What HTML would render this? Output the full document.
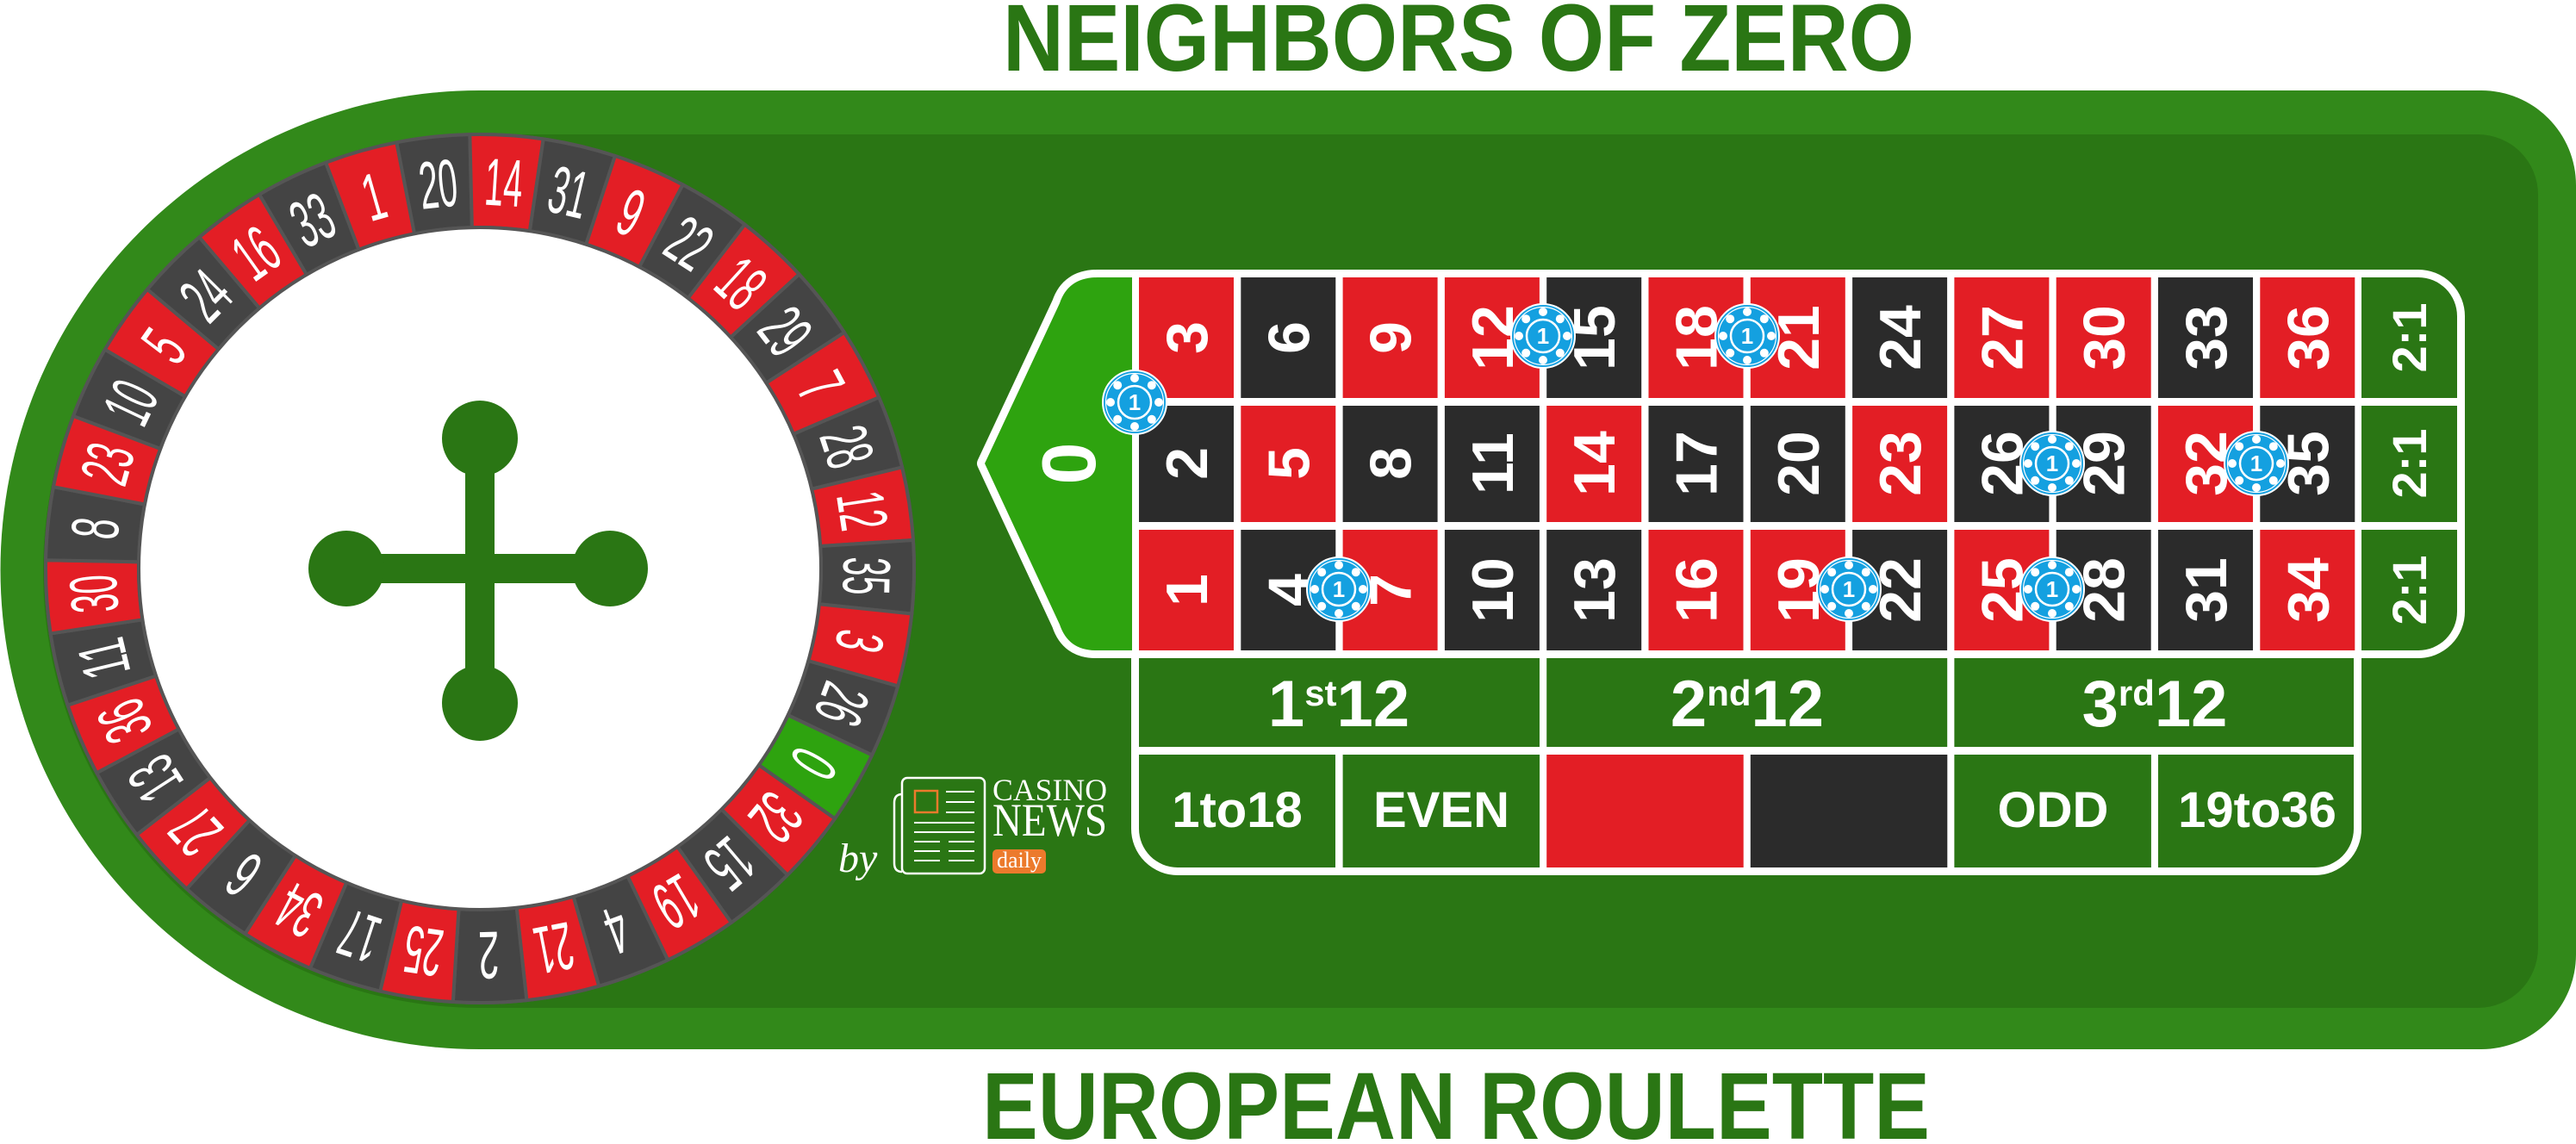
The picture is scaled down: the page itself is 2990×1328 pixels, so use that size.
<!DOCTYPE html>
<html><head><meta charset="utf-8"><style>
html,body{margin:0;padding:0;background:#fff;}
svg{display:block;}
text{font-family:"Liberation Sans",sans-serif;}
.n{font-weight:bold;font-size:68px;fill:#fff;text-anchor:middle;}
.w{font-family:"Liberation Sans Narrow","Liberation Sans",sans-serif;font-size:78px;fill:#fff;text-anchor:middle;}
.c1{font-weight:bold;font-size:26px;fill:#fff;text-anchor:middle;}
.sf{font-family:"Liberation Serif",serif;fill:#fff;}
</style></head><body>
<svg width="2990" height="1328" viewBox="0 0 2990 1328" xmlns="http://www.w3.org/2000/svg">
<defs>
<path id="wd" d="M514.26,157.8 A504,504 0 0 1 599.74,157.8 L590.58,265.4 A396,396 0 0 0 523.42,265.4 Z" stroke="#555" stroke-width="4"/>
<clipPath id="gc"><path d="M1274,322 H2807 A45,45 0 0 1 2852,367 V710 A45,45 0 0 1 2807,755 H2732 V962 A45,45 0 0 1 2687,1007 H1367 A45,45 0 0 1 1322,962 V755 H1272 Q1240,755 1230,725 L1143,538 L1230,352 Q1240,322 1274,322 Z"/></clipPath>
<g id="chip">
<circle r="37" fill="#14a0e0" stroke="#fff" stroke-width="2"/>
<circle r="33.5" fill="none" stroke="#fff" stroke-width="1.2"/>
<g fill="#fff">
<circle cx="0" cy="-28" r="5"/><circle cx="0" cy="28" r="5"/><circle cx="28" cy="0" r="5"/><circle cx="-28" cy="0" r="5"/>
<circle cx="19.8" cy="19.8" r="5"/><circle cx="-19.8" cy="19.8" r="5"/><circle cx="19.8" cy="-19.8" r="5"/><circle cx="-19.8" cy="-19.8" r="5"/>
</g>
<circle r="19" fill="#14a0e0" stroke="#fff" stroke-width="2.5"/>
</g>
</defs>

<path d="M557,105 H2880 A110,110 0 0 1 2990,215 V1108 A110,110 0 0 1 2880,1218 H557 A556.5,556.5 0 0 1 557,105 Z" fill="#32891a"/>
<path d="M557,156 H2876 A70,70 0 0 1 2946,226 V1100 A70,70 0 0 1 2876,1170 H557 A507,507 0 0 1 557,156 Z" fill="#2a7614"/>

<text x="1693" y="82" style="font-size:110px;font-weight:bold" fill="#2a7614" text-anchor="middle" textLength="1058" lengthAdjust="spacingAndGlyphs">NEIGHBORS OF ZERO</text>
<text x="1690" y="1322" style="font-size:110px;font-weight:bold" fill="#2a7614" text-anchor="middle" textLength="1100" lengthAdjust="spacingAndGlyphs">EUROPEAN ROULETTE</text>

<circle cx="557" cy="660" r="506" fill="#555"/>
<g>
<use href="#wd" fill="#2ea30f" transform="rotate(120.3 557 660)"/>
<use href="#wd" fill="#e31e25" transform="rotate(130.03 557 660)"/>
<use href="#wd" fill="#444" transform="rotate(139.76 557 660)"/>
<use href="#wd" fill="#e31e25" transform="rotate(149.49 557 660)"/>
<use href="#wd" fill="#444" transform="rotate(159.22 557 660)"/>
<use href="#wd" fill="#e31e25" transform="rotate(168.95 557 660)"/>
<use href="#wd" fill="#444" transform="rotate(178.68 557 660)"/>
<use href="#wd" fill="#e31e25" transform="rotate(188.41 557 660)"/>
<use href="#wd" fill="#444" transform="rotate(198.14 557 660)"/>
<use href="#wd" fill="#e31e25" transform="rotate(207.87 557 660)"/>
<use href="#wd" fill="#444" transform="rotate(217.6 557 660)"/>
<use href="#wd" fill="#e31e25" transform="rotate(227.33 557 660)"/>
<use href="#wd" fill="#444" transform="rotate(237.06 557 660)"/>
<use href="#wd" fill="#e31e25" transform="rotate(246.79 557 660)"/>
<use href="#wd" fill="#444" transform="rotate(256.52 557 660)"/>
<use href="#wd" fill="#e31e25" transform="rotate(266.25 557 660)"/>
<use href="#wd" fill="#444" transform="rotate(275.98 557 660)"/>
<use href="#wd" fill="#e31e25" transform="rotate(285.71 557 660)"/>
<use href="#wd" fill="#444" transform="rotate(295.43 557 660)"/>
<use href="#wd" fill="#e31e25" transform="rotate(305.16 557 660)"/>
<use href="#wd" fill="#444" transform="rotate(314.89 557 660)"/>
<use href="#wd" fill="#e31e25" transform="rotate(324.62 557 660)"/>
<use href="#wd" fill="#444" transform="rotate(334.35 557 660)"/>
<use href="#wd" fill="#e31e25" transform="rotate(344.08 557 660)"/>
<use href="#wd" fill="#444" transform="rotate(353.81 557 660)"/>
<use href="#wd" fill="#e31e25" transform="rotate(3.54 557 660)"/>
<use href="#wd" fill="#444" transform="rotate(13.27 557 660)"/>
<use href="#wd" fill="#e31e25" transform="rotate(23 557 660)"/>
<use href="#wd" fill="#444" transform="rotate(32.73 557 660)"/>
<use href="#wd" fill="#e31e25" transform="rotate(42.46 557 660)"/>
<use href="#wd" fill="#444" transform="rotate(52.19 557 660)"/>
<use href="#wd" fill="#e31e25" transform="rotate(61.92 557 660)"/>
<use href="#wd" fill="#444" transform="rotate(71.65 557 660)"/>
<use href="#wd" fill="#e31e25" transform="rotate(81.38 557 660)"/>
<use href="#wd" fill="#444" transform="rotate(91.11 557 660)"/>
<use href="#wd" fill="#e31e25" transform="rotate(100.84 557 660)"/>
<use href="#wd" fill="#444" transform="rotate(110.57 557 660)"/>
</g>
<g>
<text class="w" x="557" y="238" textLength="24" lengthAdjust="spacingAndGlyphs" transform="rotate(120.3 557 660)">0</text>
<text class="w" x="557" y="238" textLength="44" lengthAdjust="spacingAndGlyphs" transform="rotate(130.03 557 660)">32</text>
<text class="w" x="557" y="238" textLength="44" lengthAdjust="spacingAndGlyphs" transform="rotate(139.76 557 660)">15</text>
<text class="w" x="557" y="238" textLength="44" lengthAdjust="spacingAndGlyphs" transform="rotate(149.49 557 660)">19</text>
<text class="w" x="557" y="238" textLength="24" lengthAdjust="spacingAndGlyphs" transform="rotate(159.22 557 660)">4</text>
<text class="w" x="557" y="238" textLength="44" lengthAdjust="spacingAndGlyphs" transform="rotate(168.95 557 660)">21</text>
<text class="w" x="557" y="238" textLength="24" lengthAdjust="spacingAndGlyphs" transform="rotate(178.68 557 660)">2</text>
<text class="w" x="557" y="238" textLength="44" lengthAdjust="spacingAndGlyphs" transform="rotate(188.41 557 660)">25</text>
<text class="w" x="557" y="238" textLength="44" lengthAdjust="spacingAndGlyphs" transform="rotate(198.14 557 660)">17</text>
<text class="w" x="557" y="238" textLength="44" lengthAdjust="spacingAndGlyphs" transform="rotate(207.87 557 660)">34</text>
<text class="w" x="557" y="238" textLength="24" lengthAdjust="spacingAndGlyphs" transform="rotate(217.6 557 660)">6</text>
<text class="w" x="557" y="238" textLength="44" lengthAdjust="spacingAndGlyphs" transform="rotate(227.33 557 660)">27</text>
<text class="w" x="557" y="238" textLength="44" lengthAdjust="spacingAndGlyphs" transform="rotate(237.06 557 660)">13</text>
<text class="w" x="557" y="238" textLength="44" lengthAdjust="spacingAndGlyphs" transform="rotate(246.79 557 660)">36</text>
<text class="w" x="557" y="238" textLength="44" lengthAdjust="spacingAndGlyphs" transform="rotate(256.52 557 660)">11</text>
<text class="w" x="557" y="238" textLength="44" lengthAdjust="spacingAndGlyphs" transform="rotate(266.25 557 660)">30</text>
<text class="w" x="557" y="238" textLength="24" lengthAdjust="spacingAndGlyphs" transform="rotate(275.98 557 660)">8</text>
<text class="w" x="557" y="238" textLength="44" lengthAdjust="spacingAndGlyphs" transform="rotate(285.71 557 660)">23</text>
<text class="w" x="557" y="238" textLength="44" lengthAdjust="spacingAndGlyphs" transform="rotate(295.43 557 660)">10</text>
<text class="w" x="557" y="238" textLength="24" lengthAdjust="spacingAndGlyphs" transform="rotate(305.16 557 660)">5</text>
<text class="w" x="557" y="238" textLength="44" lengthAdjust="spacingAndGlyphs" transform="rotate(314.89 557 660)">24</text>
<text class="w" x="557" y="238" textLength="44" lengthAdjust="spacingAndGlyphs" transform="rotate(324.62 557 660)">16</text>
<text class="w" x="557" y="238" textLength="44" lengthAdjust="spacingAndGlyphs" transform="rotate(334.35 557 660)">33</text>
<text class="w" x="557" y="238" textLength="24" lengthAdjust="spacingAndGlyphs" transform="rotate(344.08 557 660)">1</text>
<text class="w" x="557" y="238" textLength="44" lengthAdjust="spacingAndGlyphs" transform="rotate(353.81 557 660)">20</text>
<text class="w" x="557" y="238" textLength="44" lengthAdjust="spacingAndGlyphs" transform="rotate(3.54 557 660)">14</text>
<text class="w" x="557" y="238" textLength="44" lengthAdjust="spacingAndGlyphs" transform="rotate(13.27 557 660)">31</text>
<text class="w" x="557" y="238" textLength="24" lengthAdjust="spacingAndGlyphs" transform="rotate(23 557 660)">9</text>
<text class="w" x="557" y="238" textLength="44" lengthAdjust="spacingAndGlyphs" transform="rotate(32.73 557 660)">22</text>
<text class="w" x="557" y="238" textLength="44" lengthAdjust="spacingAndGlyphs" transform="rotate(42.46 557 660)">18</text>
<text class="w" x="557" y="238" textLength="44" lengthAdjust="spacingAndGlyphs" transform="rotate(52.19 557 660)">29</text>
<text class="w" x="557" y="238" textLength="24" lengthAdjust="spacingAndGlyphs" transform="rotate(61.92 557 660)">7</text>
<text class="w" x="557" y="238" textLength="44" lengthAdjust="spacingAndGlyphs" transform="rotate(71.65 557 660)">28</text>
<text class="w" x="557" y="238" textLength="44" lengthAdjust="spacingAndGlyphs" transform="rotate(81.38 557 660)">12</text>
<text class="w" x="557" y="238" textLength="44" lengthAdjust="spacingAndGlyphs" transform="rotate(91.11 557 660)">35</text>
<text class="w" x="557" y="238" textLength="24" lengthAdjust="spacingAndGlyphs" transform="rotate(100.84 557 660)">3</text>
<text class="w" x="557" y="238" textLength="44" lengthAdjust="spacingAndGlyphs" transform="rotate(110.57 557 660)">26</text>
</g>
<circle cx="557" cy="660" r="396" fill="#fff" stroke="#555" stroke-width="4"/>
<g fill="#2a7614">
<rect x="540" y="509" width="34" height="307"/>
<rect x="402" y="643" width="306" height="34"/>
<circle cx="557" cy="509" r="44"/><circle cx="557" cy="816" r="44"/>
<circle cx="402" cy="660" r="44"/><circle cx="708" cy="660" r="44"/>
</g>

<text class="sf" x="973" y="1012" style="font-style:italic;font-size:48px">by</text>
<g fill="none" stroke="#fff" stroke-width="2.5">
<path d="M1047,922 Q1038,922 1038,932 V1002 Q1038,1012 1047,1012"/>
<rect x="1047" y="903" width="96" height="111" rx="6"/>
<path d="M1098,919H1131M1098,931H1131M1098,943H1131M1061,955H1131M1061,966H1131M1061,977H1091M1101,977H1131M1061,988H1091M1101,988H1131M1061,999H1091M1101,999H1131" stroke-width="2"/>
</g>
<rect x="1062" y="918" width="26" height="25" fill="none" stroke="#ec7a2c" stroke-width="2.5"/>
<text class="sf" x="1152" y="929" style="font-size:36px" textLength="133" lengthAdjust="spacingAndGlyphs">CASINO</text>
<text class="sf" x="1152" y="970" style="font-size:54px" textLength="133" lengthAdjust="spacingAndGlyphs">NEWS</text>
<rect x="1152" y="986" width="62" height="28" rx="5" fill="#ec7a2c"/>
<text class="sf" x="1157" y="1007" style="font-size:26px">daily</text>

<path d="M1274,322 H2807 A45,45 0 0 1 2852,367 V710 A45,45 0 0 1 2807,755 H2732 V962 A45,45 0 0 1 2687,1007 H1367 A45,45 0 0 1 1322,962 V755 H1272 Q1240,755 1230,725 L1143,538 L1230,352 Q1240,322 1274,322 Z" fill="#fff" stroke="#fff" stroke-width="18" stroke-linejoin="round"/>
<g clip-path="url(#gc)">
<rect x="1100" y="300" width="214" height="470" fill="#2ea30f"/>
<rect x="1322" y="322" width="110" height="140" fill="#e31e25"/>
<rect x="1440.3" y="322" width="110" height="140" fill="#2b2b2b"/>
<rect x="1558.6" y="322" width="110" height="140" fill="#e31e25"/>
<rect x="1676.9" y="322" width="110" height="140" fill="#e31e25"/>
<rect x="1795.2" y="322" width="110" height="140" fill="#2b2b2b"/>
<rect x="1913.5" y="322" width="110" height="140" fill="#e31e25"/>
<rect x="2031.8" y="322" width="110" height="140" fill="#e31e25"/>
<rect x="2150.1" y="322" width="110" height="140" fill="#2b2b2b"/>
<rect x="2268.4" y="322" width="110" height="140" fill="#e31e25"/>
<rect x="2386.7" y="322" width="110" height="140" fill="#e31e25"/>
<rect x="2505" y="322" width="110" height="140" fill="#2b2b2b"/>
<rect x="2623.3" y="322" width="110" height="140" fill="#e31e25"/>
<rect x="1322" y="471" width="110" height="135" fill="#2b2b2b"/>
<rect x="1440.3" y="471" width="110" height="135" fill="#e31e25"/>
<rect x="1558.6" y="471" width="110" height="135" fill="#2b2b2b"/>
<rect x="1676.9" y="471" width="110" height="135" fill="#2b2b2b"/>
<rect x="1795.2" y="471" width="110" height="135" fill="#e31e25"/>
<rect x="1913.5" y="471" width="110" height="135" fill="#2b2b2b"/>
<rect x="2031.8" y="471" width="110" height="135" fill="#2b2b2b"/>
<rect x="2150.1" y="471" width="110" height="135" fill="#e31e25"/>
<rect x="2268.4" y="471" width="110" height="135" fill="#2b2b2b"/>
<rect x="2386.7" y="471" width="110" height="135" fill="#2b2b2b"/>
<rect x="2505" y="471" width="110" height="135" fill="#e31e25"/>
<rect x="2623.3" y="471" width="110" height="135" fill="#2b2b2b"/>
<rect x="1322" y="615" width="110" height="140" fill="#e31e25"/>
<rect x="1440.3" y="615" width="110" height="140" fill="#2b2b2b"/>
<rect x="1558.6" y="615" width="110" height="140" fill="#e31e25"/>
<rect x="1676.9" y="615" width="110" height="140" fill="#2b2b2b"/>
<rect x="1795.2" y="615" width="110" height="140" fill="#2b2b2b"/>
<rect x="1913.5" y="615" width="110" height="140" fill="#e31e25"/>
<rect x="2031.8" y="615" width="110" height="140" fill="#e31e25"/>
<rect x="2150.1" y="615" width="110" height="140" fill="#2b2b2b"/>
<rect x="2268.4" y="615" width="110" height="140" fill="#e31e25"/>
<rect x="2386.7" y="615" width="110" height="140" fill="#2b2b2b"/>
<rect x="2505" y="615" width="110" height="140" fill="#2b2b2b"/>
<rect x="2623.3" y="615" width="110" height="140" fill="#e31e25"/>
<rect x="2741" y="322" width="120" height="140" fill="#2a7614"/>
<rect x="2741" y="471" width="120" height="135" fill="#2a7614"/>
<rect x="2741" y="615" width="120" height="150" fill="#2a7614"/>
<rect x="1322" y="764" width="465" height="103" fill="#2a7614"/>
<rect x="1795.2" y="764" width="465" height="103" fill="#2a7614"/>
<rect x="2268.4" y="764" width="465" height="103" fill="#2a7614"/>
<rect x="1310" y="876" width="240" height="140" fill="#2a7614"/>
<rect x="1558.6" y="876" width="228.5" height="140" fill="#2a7614"/>
<rect x="1795.2" y="876" width="228.5" height="140" fill="#e31e25"/>
<rect x="2031.8" y="876" width="228.5" height="140" fill="#2b2b2b"/>
<rect x="2268.4" y="876" width="228.5" height="140" fill="#2a7614"/>
<rect x="2505" y="876" width="240" height="140" fill="#2a7614"/>
</g>

<text class="n" style="font-size:88px" transform="translate(1240 538) rotate(-90)" y="31">0</text>

<g>
<text class="n" transform="translate(1377 392) rotate(-90)" y="24">3</text>
<text class="n" transform="translate(1495.3 392) rotate(-90)" y="24">6</text>
<text class="n" transform="translate(1613.6 392) rotate(-90)" y="24">9</text>
<text class="n" transform="translate(1731.9 392) rotate(-90)" y="24">12</text>
<text class="n" transform="translate(1850.2 392) rotate(-90)" y="24">15</text>
<text class="n" transform="translate(1968.5 392) rotate(-90)" y="24">18</text>
<text class="n" transform="translate(2086.8 392) rotate(-90)" y="24">21</text>
<text class="n" transform="translate(2205.1 392) rotate(-90)" y="24">24</text>
<text class="n" transform="translate(2323.4 392) rotate(-90)" y="24">27</text>
<text class="n" transform="translate(2441.7 392) rotate(-90)" y="24">30</text>
<text class="n" transform="translate(2560 392) rotate(-90)" y="24">33</text>
<text class="n" transform="translate(2678.3 392) rotate(-90)" y="24">36</text>
<text class="n" transform="translate(1377 538) rotate(-90)" y="24">2</text>
<text class="n" transform="translate(1495.3 538) rotate(-90)" y="24">5</text>
<text class="n" transform="translate(1613.6 538) rotate(-90)" y="24">8</text>
<text class="n" transform="translate(1731.9 538) rotate(-90)" y="24">11</text>
<text class="n" transform="translate(1850.2 538) rotate(-90)" y="24">14</text>
<text class="n" transform="translate(1968.5 538) rotate(-90)" y="24">17</text>
<text class="n" transform="translate(2086.8 538) rotate(-90)" y="24">20</text>
<text class="n" transform="translate(2205.1 538) rotate(-90)" y="24">23</text>
<text class="n" transform="translate(2323.4 538) rotate(-90)" y="24">26</text>
<text class="n" transform="translate(2441.7 538) rotate(-90)" y="24">29</text>
<text class="n" transform="translate(2560 538) rotate(-90)" y="24">32</text>
<text class="n" transform="translate(2678.3 538) rotate(-90)" y="24">35</text>
<text class="n" transform="translate(1377 685) rotate(-90)" y="24">1</text>
<text class="n" transform="translate(1495.3 685) rotate(-90)" y="24">4</text>
<text class="n" transform="translate(1613.6 685) rotate(-90)" y="24">7</text>
<text class="n" transform="translate(1731.9 685) rotate(-90)" y="24">10</text>
<text class="n" transform="translate(1850.2 685) rotate(-90)" y="24">13</text>
<text class="n" transform="translate(1968.5 685) rotate(-90)" y="24">16</text>
<text class="n" transform="translate(2086.8 685) rotate(-90)" y="24">19</text>
<text class="n" transform="translate(2205.1 685) rotate(-90)" y="24">22</text>
<text class="n" transform="translate(2323.4 685) rotate(-90)" y="24">25</text>
<text class="n" transform="translate(2441.7 685) rotate(-90)" y="24">28</text>
<text class="n" transform="translate(2560 685) rotate(-90)" y="24">31</text>
<text class="n" transform="translate(2678.3 685) rotate(-90)" y="24">34</text>
<text class="n" style="font-size:56px" transform="translate(2796 392) rotate(-90)" y="20">2:1</text>
<text class="n" style="font-size:56px" transform="translate(2796 538) rotate(-90)" y="20">2:1</text>
<text class="n" style="font-size:56px" transform="translate(2796 685) rotate(-90)" y="20">2:1</text>
</g>

<g font-weight="bold" fill="#fff" text-anchor="middle">
<text x="1554" y="843" font-size="76">1<tspan font-size="42" dy="-24">st</tspan><tspan dy="24">12</tspan></text>
<text x="2028" y="843" font-size="76">2<tspan font-size="42" dy="-24">nd</tspan><tspan dy="24">12</tspan></text>
<text x="2501" y="843" font-size="76">3<tspan font-size="42" dy="-24">rd</tspan><tspan dy="24">12</tspan></text>
<text x="1436" y="960" font-size="58">1to18</text>
<text x="1673" y="960" font-size="58">EVEN</text>
<text x="2383" y="960" font-size="58">ODD</text>
<text x="2620" y="960" font-size="58">19to36</text>
</g>

<use href="#chip" x="1317" y="467"/><text class="c1" x="1317" y="476">1</text>
<use href="#chip" x="1791" y="390"/><text class="c1" x="1791" y="399">1</text>
<use href="#chip" x="2028" y="390"/><text class="c1" x="2028" y="399">1</text>
<use href="#chip" x="1554" y="684"/><text class="c1" x="1554" y="693">1</text>
<use href="#chip" x="2382" y="538"/><text class="c1" x="2382" y="547">1</text>
<use href="#chip" x="2619" y="538"/><text class="c1" x="2619" y="547">1</text>
<use href="#chip" x="2146" y="684"/><text class="c1" x="2146" y="693">1</text>
<use href="#chip" x="2382" y="684"/><text class="c1" x="2382" y="693">1</text>
</svg>
</body></html>
